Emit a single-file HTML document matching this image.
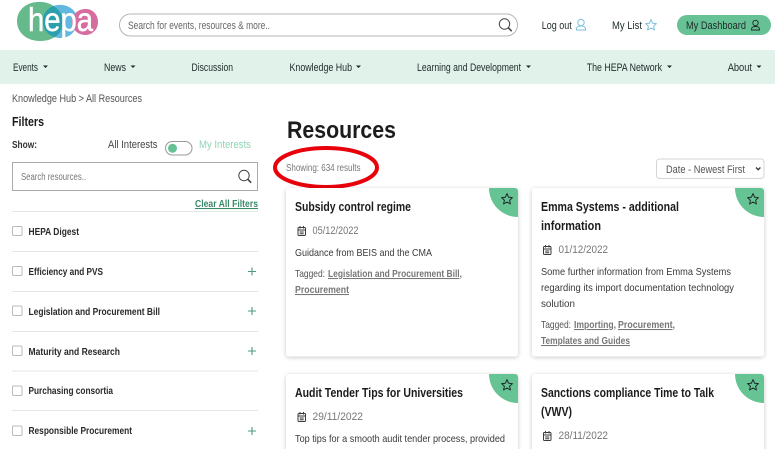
<!DOCTYPE html>
<html lang="en"><head><meta charset="utf-8"><title>Resources</title>
<style>
html,body{margin:0;padding:0;background:#fff;width:775px;height:449px;overflow:hidden}
svg{display:block;filter:blur(.3px)}
text{font-family:"Liberation Sans",sans-serif;font-size:11px;fill:#2b2b2b}
.n{font-size:11px;fill:#1f2a2a}
.f{font-size:10.5px;font-weight:bold;fill:#2a2a2a}
.t{font-size:13px;font-weight:bold;fill:#1c1c1c}
.d{font-size:11px;fill:#777}
.b{font-size:10.5px;fill:#3a3a3a}
.g{font-size:10.5px;fill:#555}
.l{font-size:10.5px;font-weight:bold;fill:#777;text-decoration:underline}
</style></head><body>
<svg width="775" height="449" viewBox="0 0 775 449" xmlns="http://www.w3.org/2000/svg">
<defs>
<filter id="s" x="-5%" y="-5%" width="110%" height="110%"><feDropShadow dx="0" dy="1" stdDeviation="2" flood-color="#000" flood-opacity=".22"/></filter>
<clipPath id="c"><path d="M17 21C17 9 28 1 42 2 54 3 63 12 63 22 63 33 54 41 40 41 27 41 17 33 17 21Z"/></clipPath>
<g id="star"><path d="M0-5.4 1.6-1.8 5.4-1.4 2.6 1.2 3.4 5 0 3 -3.4 5 -2.6 1.2 -5.4-1.4 -1.6-1.8Z" fill="none" stroke-width="1" stroke-linejoin="round"/></g>
<g id="cal" fill="none" stroke="#3a3a3a" stroke-width="1"><rect x=".5" y="1.5" width="7.5" height="8" rx="1"/><path d="M.5 4h7.5M2.5 0v2.500M6 0v2.500M2.200 6h4M2.200 7.800h4"/></g>
<g id="plus" stroke="#4d9a7b" stroke-width="1.1"><path d="M-4 0H4M0-4V4"/></g>
<g id="glass" fill="none" stroke="#444"><circle cx="0" cy="0" r="5.2" stroke-width="1"/><path d="M3.8 3.8 7.2 7.2" stroke-width="1.6"/></g>
</defs>
<rect width="775" height="449" fill="#fff"/>

<!-- logo -->
<path d="M17 21C17 9 28 1 42 2 54 3 63 12 63 22 63 33 54 41 40 41 27 41 17 33 17 21Z" fill="#66b98a"/>
<path id="bl" d="M43 18C45 9 53 4 62 5 72 6 78 13 77 22 76 32 70 38 60 38 49 38 41 28 43 18Z" fill="#62b8de"/>
<path d="M43 18C45 9 53 4 62 5 72 6 78 13 77 22 76 32 70 38 60 38 49 38 41 28 43 18Z" fill="#2ba0ac" clip-path="url(#c)"/>
<path d="M72 20C73 13 79 9 86 9 93 9 98 15 98 22 98 30 92 35 85 35 77 35 71 28 72 20Z" fill="#d76c9e"/>
<text x="28" y="31" style="font-size:33px;fill:#fff;stroke:#fff;stroke-width:.5px" textLength="65" lengthAdjust="spacingAndGlyphs">hepa</text>

<!-- search -->
<rect x="119.500" y="14" width="398" height="22" rx="11" fill="#fff" stroke="#b5b5b5"/>
<text x="128" y="29" class="d" style="fill:#666" textLength="142" lengthAdjust="spacingAndGlyphs">Search for events, resources &amp; more..</text>
<use href="#glass" x="504.500" y="24"/>

<text x="541.700" y="29" class="n" textLength="30" lengthAdjust="spacingAndGlyphs">Log out</text>
<g fill="none" stroke="#7cc0de"><circle cx="581" cy="22.500" r="3.200"/><path d="M576.500 30v-1c0-2 2-3 4.500-3s4.500 1 4.500 3v1z"/></g>
<text x="612" y="29" class="n" textLength="30" lengthAdjust="spacingAndGlyphs">My List</text>
<use href="#star" x="651" y="25" stroke="#7cc0de"/>
<rect x="677" y="15" width="94" height="20" rx="10" fill="#66c194"/>
<text x="686" y="29" class="n" textLength="60" lengthAdjust="spacingAndGlyphs">My Dashboard</text>
<g fill="none" stroke="#1f2a2a" stroke-width=".9"><circle cx="755.500" cy="23" r="2.700"/><path d="M751.500 30v-1c0-1.600 1.800-2.500 4-2.500s4 .9 4 2.500v1z"/></g>

<!-- nav -->
<rect y="50" width="775" height="34" fill="#e0f2e9"/>
<g>
<text x="13" y="71" class="n" textLength="25" lengthAdjust="spacingAndGlyphs">Events</text>
<text x="104" y="71" class="n" textLength="22" lengthAdjust="spacingAndGlyphs">News</text>
<text x="191.500" y="71" class="n" textLength="41.500" lengthAdjust="spacingAndGlyphs">Discussion</text>
<text x="289.500" y="71" class="n" textLength="62.500" lengthAdjust="spacingAndGlyphs">Knowledge Hub</text>
<text x="417" y="71" class="n" textLength="104" lengthAdjust="spacingAndGlyphs">Learning and Development</text>
<text x="586.700" y="71" class="n" textLength="75.300" lengthAdjust="spacingAndGlyphs">The HEPA Network</text>
<text x="727.700" y="71" class="n" textLength="24.300" lengthAdjust="spacingAndGlyphs">About</text>
</g>
<g fill="#1f2a2a">
<path d="M43 65.500h5l-2.500 2.500z"/><path d="M130.500 65.500h5l-2.500 2.500z"/><path d="M356 65.500h5l-2.500 2.500z"/><path d="M526 65.500h5l-2.500 2.500z"/><path d="M667 65.500h5l-2.500 2.500z"/><path d="M756.500 65.500h5l-2.500 2.500z"/>
</g>

<!-- left -->
<text x="12" y="102" class="d" style="fill:#555" textLength="130" lengthAdjust="spacingAndGlyphs">Knowledge Hub &gt; All Resources</text>
<text x="12" y="126" style="font-size:12.5px;font-weight:bold;fill:#1c1c1c" textLength="32" lengthAdjust="spacingAndGlyphs">Filters</text>
<text x="12" y="148" style="font-size:10.5px;font-weight:bold;fill:#333" textLength="25" lengthAdjust="spacingAndGlyphs">Show:</text>
<text x="108" y="148" class="n" style="fill:#444" textLength="49.500" lengthAdjust="spacingAndGlyphs">All Interests</text>
<rect x="165.500" y="141.500" width="26.500" height="13.500" rx="6.700" fill="#fff" stroke="#999"/>
<circle cx="172.500" cy="148.300" r="4.500" fill="#66c194"/>
<text x="199" y="148" class="n" style="fill:#8fd4b3" textLength="52" lengthAdjust="spacingAndGlyphs">My Interests</text>
<rect x="12.500" y="162.500" width="245" height="28" fill="#fff" stroke="#aaa"/>
<text x="21" y="180" style="font-size:10px;fill:#777" textLength="65" lengthAdjust="spacingAndGlyphs">Search resources..</text>
<use href="#glass" x="244" y="175.500"/>
<text x="195" y="207" style="font-size:10.5px;font-weight:bold;fill:#3b8a68;text-decoration:underline" textLength="63" lengthAdjust="spacingAndGlyphs">Clear All Filters</text>
<g fill="#e5e5e5"><rect x="12" y="211" width="246" height="1"/><rect x="12" y="251" width="246" height="1"/><rect x="12" y="291" width="246" height="1"/><rect x="12" y="331" width="246" height="1"/><rect x="12" y="370.500" width="246" height="1"/><rect x="12" y="410" width="246" height="1"/></g>
<g fill="#fff" stroke="#bbb"><rect x="12.500" y="226.500" width="9.500" height="9" rx="1"/><rect x="12.500" y="266.500" width="9.500" height="9" rx="1"/><rect x="12.500" y="306" width="9.500" height="9.500" rx="1"/><rect x="12.500" y="346" width="9.500" height="9.500" rx="1"/><rect x="12.500" y="386" width="9.500" height="9.500" rx="1"/><rect x="12.500" y="426" width="9.500" height="9.500" rx="1"/></g>
<text x="28.500" y="235" class="f" textLength="50.500" lengthAdjust="spacingAndGlyphs">HEPA Digest</text>
<text x="28.500" y="275" class="f" textLength="74.500" lengthAdjust="spacingAndGlyphs">Efficiency and PVS</text>
<text x="28.500" y="315" class="f" textLength="131.500" lengthAdjust="spacingAndGlyphs">Legislation and Procurement Bill</text>
<text x="28.500" y="355" class="f" textLength="91.500" lengthAdjust="spacingAndGlyphs">Maturity and Research</text>
<text x="28.500" y="394" class="f" textLength="84.500" lengthAdjust="spacingAndGlyphs">Purchasing consortia</text>
<text x="28.500" y="434" class="f" textLength="103.500" lengthAdjust="spacingAndGlyphs">Responsible Procurement</text>
<use href="#plus" x="252" y="271.500"/><use href="#plus" x="252" y="311"/><use href="#plus" x="252" y="351"/><use href="#plus" x="252" y="431"/>

<!-- right header -->
<text x="287" y="138" style="font-size:24px;font-weight:bold;fill:#1c1c1c" textLength="109" lengthAdjust="spacingAndGlyphs">Resources</text>
<text x="286" y="171" style="font-size:10px;fill:#777" textLength="74.500" lengthAdjust="spacingAndGlyphs">Showing: 634 results</text>
<ellipse cx="326" cy="167.500" rx="51" ry="19.500" fill="none" stroke="#e8000b" stroke-width="4"/>
<rect x="656.500" y="159" width="107.500" height="19.500" rx="3" fill="#fff" stroke="#d5d5d5"/>
<text x="666" y="173" class="d" style="fill:#555" textLength="79" lengthAdjust="spacingAndGlyphs">Date - Newest First</text>
<path d="M756 167.500l2.200 2.200 2.200-2.200" fill="none" stroke="#333" stroke-width="1.300"/>

<!-- cards -->
<g fill="#fff" filter="url(#s)">
<rect x="286" y="188" width="232" height="168.500" rx="3"/>
<rect x="532" y="188" width="232" height="168.500" rx="3"/>
<rect x="286" y="374" width="232" height="90" rx="3"/>
<rect x="532" y="374" width="232" height="90" rx="3"/>
</g>
<g fill="#66c394">
<path d="M489 188H515a3 3 0 0 1 3 3V217A29 29 0 0 1 489 188Z"/>
<path d="M735 188H761a3 3 0 0 1 3 3V217A29 29 0 0 1 735 188Z"/>
<path d="M489 374H515a3 3 0 0 1 3 3V403A29 29 0 0 1 489 374Z"/>
<path d="M735 374H761a3 3 0 0 1 3 3V403A29 29 0 0 1 735 374Z"/>
</g>
<use href="#star" x="507" y="199" stroke="#1f2a2a"/><use href="#star" x="753" y="199" stroke="#1f2a2a"/><use href="#star" x="507" y="385" stroke="#1f2a2a"/><use href="#star" x="753" y="385" stroke="#1f2a2a"/>

<!-- card 1 -->
<text x="295" y="211" class="t" textLength="116" lengthAdjust="spacingAndGlyphs">Subsidy control regime</text>
<use href="#cal" x="297.500" y="226"/>
<text x="312.500" y="234" class="d" textLength="46" lengthAdjust="spacingAndGlyphs">05/12/2022</text>
<text x="295" y="256" class="b" textLength="137" lengthAdjust="spacingAndGlyphs">Guidance from BEIS and the CMA</text>
<text x="295" y="277" class="g" textLength="30" lengthAdjust="spacingAndGlyphs">Tagged:</text>
<text x="328" y="277" class="l" textLength="134" lengthAdjust="spacingAndGlyphs">Legislation and Procurement Bill,</text>
<text x="295" y="293" class="l" textLength="54" lengthAdjust="spacingAndGlyphs">Procurement</text>

<!-- card 2 -->
<text x="541" y="211" class="t" textLength="138" lengthAdjust="spacingAndGlyphs">Emma Systems - additional</text>
<text x="541" y="230" class="t" textLength="60" lengthAdjust="spacingAndGlyphs">information</text>
<use href="#cal" x="543" y="245"/>
<text x="558.500" y="253" class="d" textLength="49.500" lengthAdjust="spacingAndGlyphs">01/12/2022</text>
<text x="541" y="275" class="b" textLength="190" lengthAdjust="spacingAndGlyphs">Some further information from Emma Systems</text>
<text x="541" y="291" class="b" textLength="193" lengthAdjust="spacingAndGlyphs">regarding its import documentation technology</text>
<text x="541" y="307" class="b" textLength="34" lengthAdjust="spacingAndGlyphs">solution</text>
<text x="541" y="328" class="g" textLength="30" lengthAdjust="spacingAndGlyphs">Tagged:</text>
<text x="574" y="328" class="l" textLength="42" lengthAdjust="spacingAndGlyphs">Importing,</text>
<text x="618" y="328" class="l" textLength="57" lengthAdjust="spacingAndGlyphs">Procurement,</text>
<text x="541" y="344" class="l" textLength="89" lengthAdjust="spacingAndGlyphs">Templates and Guides</text>

<!-- card 3 -->
<text x="295" y="397" class="t" textLength="168" lengthAdjust="spacingAndGlyphs">Audit Tender Tips for Universities</text>
<use href="#cal" x="297.500" y="412"/>
<text x="312.500" y="420" class="d" textLength="50.500" lengthAdjust="spacingAndGlyphs">29/11/2022</text>
<text x="295" y="442" class="b" textLength="210" lengthAdjust="spacingAndGlyphs">Top tips for a smooth audit tender process, provided</text>

<!-- card 4 -->
<text x="541" y="397" class="t" textLength="173" lengthAdjust="spacingAndGlyphs">Sanctions compliance Time to Talk</text>
<text x="541" y="416" class="t" textLength="31" lengthAdjust="spacingAndGlyphs">(VWV)</text>
<use href="#cal" x="543" y="431"/>
<text x="558.500" y="439" class="d" textLength="49.500" lengthAdjust="spacingAndGlyphs">28/11/2022</text>
</svg>
</body></html>
